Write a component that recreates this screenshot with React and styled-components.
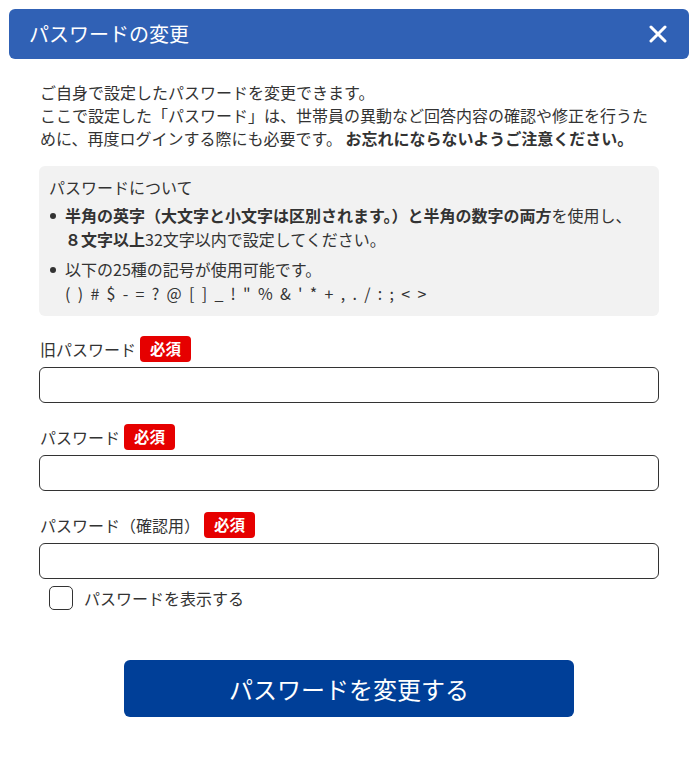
import React, { useState } from "react";
import styled, { createGlobalStyle } from "styled-components";

const Global = createGlobalStyle`
  html, body { margin: 0; padding: 0; background: #fff; }
  body { font-family: "Noto Sans CJK JP", "Noto Sans", sans-serif; color: #333; }
  * { box-sizing: border-box; }
`;

const Dialog = styled.div`
  width: 698px;
  height: 757px;
  padding: 9px 9px 0;
  display: flex;
  flex-direction: column;
`;

const Header = styled.div`
  height: 50px;
  background: #3061b5;
  border-radius: 6px;
  display: flex;
  align-items: center;
  justify-content: space-between;
  padding: 0 22px 0 20px;
  color: #fff;
`;

const Title = styled.h1`
  margin: 0;
  font-size: 20px;
  font-weight: 400;
  line-height: 24px;
`;

const CloseButton = styled.button`
  border: 0;
  background: transparent;
  padding: 0;
  width: 18px;
  height: 18px;
  display: flex;
  cursor: pointer;
`;

const Body = styled.div`
  padding: 22px 30px 0;
  display: flex;
  flex-direction: column;
`;

const Intro = styled.div`
  margin: 0 0 0 1px;
  font-size: 16px;
  line-height: 23px;
  color: #333;
`;

const IntroLine = styled.div`
  white-space: nowrap;
`;

const Strong = styled.strong`
  font-weight: 700;
`;

const InfoBox = styled.div`
  margin-top: 16px;
  background: #f2f2f2;
  border-radius: 6px;
  padding: 9px 10px 11px;
`;

const InfoTitle = styled.div`
  font-size: 16px;
  line-height: 24px;
  margin-bottom: 4px;
`;

const List = styled.ul`
  margin: 0;
  padding: 0;
  list-style: none;
  display: flex;
  flex-direction: column;
  gap: 6px;
`;

const Item = styled.li`
  position: relative;
  padding-left: 16px;
  font-size: 16px;
  line-height: 24px;
  &::before {
    content: "";
    position: absolute;
    left: 1px;
    top: 10px;
    width: 6px;
    height: 6px;
    border-radius: 50%;
    background: #333;
  }
`;

const Line = styled.span`
  display: block;
`;

const Symbols = styled.span`
  display: block;
  font-size: 16px;
  letter-spacing: 1.85px;
  white-space: pre;
`;

const Field = styled.div`
  margin-top: ${(p) => p.$top}px;
  display: flex;
  flex-direction: column;
  gap: 5px;
`;

const LabelRow = styled.label`
  display: flex;
  align-items: center;
  gap: 4px;
  height: 26px;
  font-size: 16px;
  line-height: 24px;
  padding-left: 1px;
`;

const Badge = styled.span`
  display: inline-flex;
  align-items: center;
  justify-content: center;
  height: 26px;
  padding: 0 10px;
  border-radius: 4px;
  background: #e60000;
  color: #fff;
  font-size: 15.5px;
  font-weight: 700;
  line-height: 1;
`;

const Input = styled.input`
  height: 36px;
  width: 100%;
  border: 1px solid #333;
  border-radius: 6px;
  padding: 0 10px;
  font-size: 16px;
  font-family: inherit;
  background: #fff;
  outline: none;
`;

const CheckRow = styled.label`
  margin-top: 7px;
  padding-left: 10px;
  display: flex;
  align-items: center;
  gap: 11px;
  font-size: 16px;
  line-height: 24px;
  cursor: pointer;
`;

const Box = styled.span`
  width: 24px;
  height: 24px;
  border: 1px solid #333;
  border-radius: 5px;
  background: #fff;
  display: inline-block;
`;

const HiddenCheck = styled.input`
  display: none;
`;

const Submit = styled.button`
  margin: 50px auto 0;
  width: 450px;
  height: 57px;
  border: 0;
  border-radius: 6px;
  background: #003f98;
  color: #fff;
  font-family: inherit;
  font-size: 24px;
  font-weight: 400;
  cursor: pointer;
`;

export default function App() {
  const [show, setShow] = useState(false);
  const type = show ? "text" : "password";
  return (
    <>
      <Global />
      <Dialog>
        <Header>
          <Title>パスワードの変更</Title>
          <CloseButton aria-label="閉じる">
            <svg width="18" height="18" viewBox="0 0 18 18">
              <path d="M2 2L16 16M16 2L2 16" stroke="#fff" strokeWidth="3" strokeLinecap="round" />
            </svg>
          </CloseButton>
        </Header>
        <Body>
          <Intro>
            <IntroLine>ご自身で設定したパスワードを変更できます。</IntroLine>
            <IntroLine>ここで設定した「パスワード」は、世帯員の異動など回答内容の確認や修正を行うた</IntroLine>
            <IntroLine>
              <span>めに、再度ログインする際にも必要です。 </span>
              <Strong>お忘れにならないようご注意ください。</Strong>
            </IntroLine>
          </Intro>
          <InfoBox>
            <InfoTitle>パスワードについて</InfoTitle>
            <List>
              <Item>
                <Line>
                  <Strong>半角の英字（大文字と小文字は区別されます。）と半角の数字の両方</Strong>を使用し、
                </Line>
                <Line>
                  <Strong>８文字以上</Strong>32文字以内で設定してください。
                </Line>
              </Item>
              <Item>
                <Line>以下の25種の記号が使用可能です。</Line>
                <Symbols>{`( ) # $ - = ? @ [ ] _ ! " % & ' * + , . / : ; < >`}</Symbols>
              </Item>
            </List>
          </InfoBox>
          <Field $top={20}>
            <LabelRow>
              旧パスワード<Badge>必須</Badge>
            </LabelRow>
            <Input type={type} />
          </Field>
          <Field $top={21}>
            <LabelRow>
              パスワード<Badge>必須</Badge>
            </LabelRow>
            <Input type={type} />
          </Field>
          <Field $top={21}>
            <LabelRow>
              パスワード（確認用）<Badge>必須</Badge>
            </LabelRow>
            <Input type={type} />
          </Field>
          <CheckRow>
            <HiddenCheck type="checkbox" checked={show} onChange={(e) => setShow(e.target.checked)} />
            <Box />
            パスワードを表示する
          </CheckRow>
          <Submit>パスワードを変更する</Submit>
        </Body>
      </Dialog>
    </>
  );
}
